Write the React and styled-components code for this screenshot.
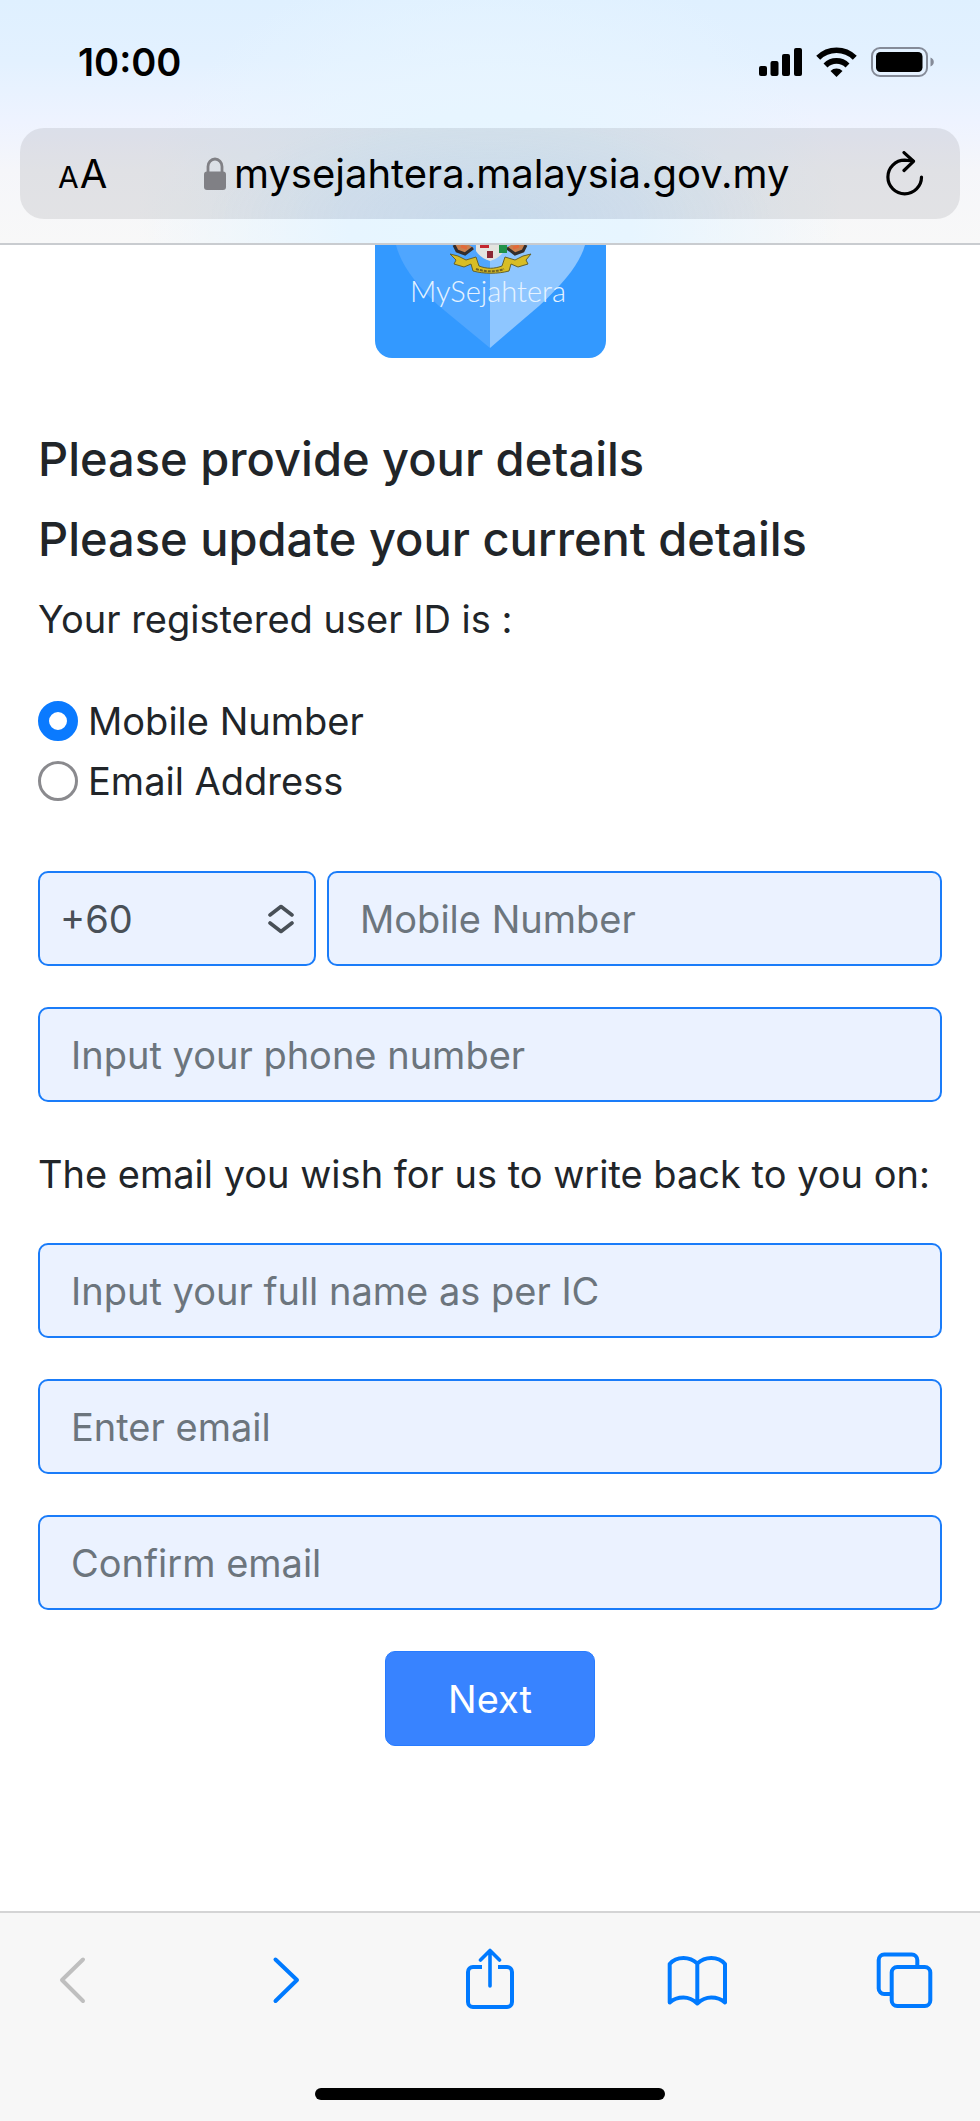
import React, { useState } from "react";
import styled, { createGlobalStyle } from "styled-components";

const GlobalStyle = createGlobalStyle`
    * {
        box-sizing: border-box;
    }

    body {
        margin: 0;
        background: #fff;
        color: #212529;
        font-family: Inter, "Liberation Sans", sans-serif;
        font-size: 38px;
        line-height: 60px;
    }

    input, select, button {
        font: inherit;
        margin: 0;
    }
`;

const Screen = styled.div`
    display: flex;
    flex-direction: column;
    min-height: 100vh;
`;

const BrowserTop = styled.header`
    padding: 32px 20px 24px;
    border-bottom: 2px solid #c9ccd0;
    background:
        radial-gradient(ellipse 36% 110% at 50% 90%, #e6f7ff 0%, #e7f5ff 40%, rgba(230, 246, 255, 0) 100%),
        linear-gradient(#dff0ff 0%, #e3f1ff 25%, #eef3ff 50%, #f5f6fa 70%, #f8f8f8 100%);
`;

const StatusBar = styled.div`
    display: flex;
    align-items: center;
    justify-content: space-between;
    padding: 0 26px 0 58px;
    margin-bottom: 36px;
    color: #000;
`;

const Clock = styled.time`
    font-weight: 600;
`;

const StatusIcons = styled.div`
    display: flex;
    align-items: center;
    gap: 14px;
`;

const AddressBar = styled.div`
    display: flex;
    align-items: center;
    justify-content: space-between;
    height: 91px;
    padding: 0 36px 0 38px;
    border-radius: 24px;
    background:
        radial-gradient(ellipse 30% 120% at 50% 100%, rgba(150, 185, 240, 0.2), rgba(150, 185, 240, 0)),
        rgba(118, 118, 122, 0.16);
`;

const PlainButton = styled.button`
    display: flex;
    align-items: center;
    padding: 0;
    border: 0;
    background: none;
    color: ${(props) => props.$color || "#000"};
`;

const TextSizeButton = styled(PlainButton)`
    align-items: baseline;
    gap: 1px;
    padding-top: 4px;
    font-size: 40px;
`;

const SmallLetter = styled.span`
    font-size: 30px;
`;

const Address = styled(PlainButton)`
    gap: 8px;
    font-size: 40px;
`;

const LogoBox = styled.div`
    display: flex;
    justify-content: center;
    margin-bottom: 71px;
`;

const Content = styled.main`
    flex: 1;
    padding: 0 38px 40px;
`;

const Heading = styled.h5`
    margin: 0 0 20px;
    font-size: 47px;
    line-height: 60px;
    font-weight: 500;
`;

const Text = styled.p`
    margin: 0;
`;

const RadioGroup = styled.div`
    display: flex;
    flex-direction: column;
    margin: 42px 0 60px;
`;

const RadioLabel = styled.label`
    display: flex;
    align-items: center;
    gap: 10px;
`;

const Radio = styled.input`
    appearance: none;
    width: 40px;
    height: 40px;
    border: 3px solid #8a8a8e;
    border-radius: 50%;
    background: #fff;

    &:checked {
        border: 11px solid #0a7aff;
    }
`;

const Fields = styled.div`
    display: flex;
    flex-direction: column;
    gap: 41px;
`;

const PhoneRow = styled.div`
    display: grid;
    grid-template-columns: 278px 1fr;
    gap: 11px;
`;

const Input = styled.input`
    width: 100%;
    height: 95px;
    padding: 0 31px;
    border: 2px solid #1a7cf9;
    border-radius: 10px;
    background: #ebf2ff;
    color: #495057;

    &::placeholder {
        color: #6c757d;
        opacity: 1;
    }
`;

const SelectBox = styled.div`
    display: grid;
    align-items: center;

    & > * {
        grid-area: 1 / 1;
    }

    & > svg {
        justify-self: end;
        margin-right: 22px;
        pointer-events: none;
    }
`;

const Select = styled(Input)`
    appearance: none;
    padding: 0 60px 0 20px;
`;

const EmailNote = styled(Text)`
    margin: 42px 0 39px;
`;

const NextButton = styled.button`
    display: block;
    width: 210px;
    height: 95px;
    margin: 41px auto 0;
    border: 1px solid #277bff;
    border-radius: 10px;
    background: #3883ff;
    color: #fff;
`;

const BrowserBottom = styled.footer`
    padding: 35px 42px 21px;
    border-top: 2px solid #d4d4d5;
    background: #f7f7f7;
`;

const Toolbar = styled.nav`
    display: flex;
    justify-content: space-between;
    margin-bottom: 76px;
`;

const HomeIndicator = styled.div`
    width: 350px;
    height: 12px;
    margin: 0 auto;
    border-radius: 6px;
    background: #000;
`;

const SignalIcon = () => (
    <svg width="43" height="30" viewBox="0 0 43 30">
        <rect x="0" y="19" width="8" height="10" rx="2" />
        <rect x="11.5" y="14" width="8" height="15" rx="2" />
        <rect x="23" y="7" width="8" height="22" rx="2" />
        <rect x="35" y="1" width="8" height="28" rx="2" />
    </svg>
);

const WifiIcon = () => (
    <svg width="41" height="30" viewBox="0 0 41 30">
        <g fill="none" stroke="#000" strokeWidth="5.6">
            <path d="M2.2 10.8a26 26 0 0 1 36.6 0" />
            <path d="M9.5 18.4a15.6 15.6 0 0 1 22 0" />
        </g>
        <path d="M20.5 30l-6-6a8.6 8.6 0 0 1 12 0z" />
    </svg>
);

const BatteryIcon = () => (
    <svg width="63" height="30" viewBox="0 0 63 30">
        <rect x="1" y="1" width="55" height="28" rx="8" fill="none" stroke="#858b98" strokeWidth="2" />
        <rect x="5" y="5" width="46.5" height="20" rx="4.5" />
        <path d="M59.5 10.5c2 .8 3.3 2.5 3.3 4.5s-1.3 3.7-3.3 4.5z" fill="#858b98" />
    </svg>
);

const LockIcon = () => (
    <svg width="22" height="33" viewBox="0 0 22 33">
        <rect x="0" y="14.5" width="22" height="18.5" rx="3" fill="#808085" />
        <path d="M4 15V9.5a7 7.5 0 0 1 14 0V15" fill="none" stroke="#808085" strokeWidth="2.8" />
    </svg>
);

const ReloadIcon = () => (
    <svg width="38" height="46" viewBox="0 0 38 46" fill="none" stroke="#000" strokeWidth="3.2" strokeLinecap="round" strokeLinejoin="round">
        <path d="M35.5 26A16.8 16.8 0 1 1 18.700 9.200L27 10" />
        <path d="M18 1.600l9.500 8.700L18 19.500" />
    </svg>
);

const SelectArrows = () => (
    <svg width="26" height="30" viewBox="0 0 26 30" fill="none" stroke="#495057" strokeWidth="3.6" strokeLinecap="round" strokeLinejoin="round">
        <path d="M2 11L13 2.5 24 11" />
        <path d="M2 19l11 8.5L24 19" />
    </svg>
);

const ToolIcon = ({ children }) => (
    <svg width="64" height="64" viewBox="0 0 64 64" fill="none" stroke="currentColor" strokeWidth="4" strokeLinecap="round" strokeLinejoin="round">
        {children}
    </svg>
);

const Logo = () => (
    <svg width="232" height="113" viewBox="0 0 232 113" role="img" aria-label="MySejahtera">
        <path d="M1 0h231v96a17 17 0 0 1-17 17H18A17 17 0 0 1 1 96z" fill="#3399ff" />
        <path d="M22 0H116V103L65 61C43 41 27 20 22 0z" fill="#4fa6ff" />
        <path d="M211 0H116V103L165 61C191 37 206 18 211 0z" fill="#8ec6ff" />
        {/* coat of arms, only the lower part shows */}
        <path d="M81 0h14l5 3-6 5-9-1zM151 0h-14l-5 3 6 5 9-1z" fill="#c8804f" />
        <path d="M80 0l3 6 8 3 8-6M152 0l-3 6-8 3-8-6" fill="none" stroke="#332d2c" strokeWidth="3" />
        <path d="M87 1l6 2M139 3l6-2" stroke="#e26a3a" strokeWidth="3" />
        <path d="M102 0h28v6c-3 5-8 8-14 10-6-2-11-5-14-10z" fill="#e4e4df" />
        <path d="M106 0h9v3h-9z" fill="#c4262e" />
        <path d="M125 0h8v8h-8z" fill="#20924a" />
        <path d="M113 6h6v7h-6z" fill="#8c2633" />
        <path d="M76 9l8 2 8 4 10-3 3 9c8 3 15 3 23 0l3-9 10 3 8-4 8-2-5 6 2 4-10 3-7-3-2 7c-11 3-25 3-36 0l-2-7-7 3-10-3 2-4z" fill="#d8bd25" stroke="#65622b" strokeWidth="1" />
        <path d="M102 24c9 3 19 3 28 0" fill="none" stroke="#716323" strokeWidth="2" strokeDasharray="3 1" />
        <text x="114" y="57" textAnchor="middle" fill="#e6f3ff" fontFamily="Lato, sans-serif" fontSize="29" fontWeight="300">MySejahtera</text>
    </svg>
);

export default function App() {
    const [idType, setIdType] = useState("mobile");

    return (
        <>
            <GlobalStyle />
            <Screen>
                <BrowserTop>
                    <StatusBar>
                        <Clock>10:00</Clock>
                        <StatusIcons>
                            <SignalIcon />
                            <WifiIcon />
                            <BatteryIcon />
                        </StatusIcons>
                    </StatusBar>
                    <AddressBar>
                        <TextSizeButton type="button" aria-label="Text size">
                            <SmallLetter>A</SmallLetter>
                            <span>A</span>
                        </TextSizeButton>
                        <Address type="button">
                            <LockIcon />
                            mysejahtera.malaysia.gov.my
                        </Address>
                        <PlainButton type="button" aria-label="Reload">
                            <ReloadIcon />
                        </PlainButton>
                    </AddressBar>
                </BrowserTop>

                <Content>
                    <LogoBox>
                        <Logo />
                    </LogoBox>
                    <Heading>Please provide your details</Heading>
                    <Heading>Please update your current details</Heading>
                    <Text id="id-type">Your registered user ID is :</Text>

                    <RadioGroup role="radiogroup" aria-labelledby="id-type">
                        <RadioLabel>
                            <Radio type="radio" name="idType" checked={idType === "mobile"} onChange={() => setIdType("mobile")} />
                            Mobile Number
                        </RadioLabel>
                        <RadioLabel>
                            <Radio type="radio" name="idType" checked={idType === "email"} onChange={() => setIdType("email")} />
                            Email Address
                        </RadioLabel>
                    </RadioGroup>

                    <Fields>
                        <PhoneRow>
                            <SelectBox>
                                <Select as="select" aria-label="Country code" defaultValue="+60">
                                    <option value="+60">+60</option>
                                    <option value="+65">+65</option>
                                </Select>
                                <SelectArrows />
                            </SelectBox>
                            <Input type="tel" placeholder="Mobile Number" aria-label="Mobile Number" />
                        </PhoneRow>
                        <Input type="tel" placeholder="Input your phone number" aria-label="Phone number" />
                    </Fields>

                    <EmailNote>The email you wish for us to write back to you on:</EmailNote>

                    <Fields>
                        <Input type="text" placeholder="Input your full name as per IC" aria-label="Full name" />
                        <Input type="email" placeholder="Enter email" aria-label="Email" />
                        <Input type="email" placeholder="Confirm email" aria-label="Confirm email" />
                    </Fields>
                    <NextButton type="button">Next</NextButton>
                </Content>

                <BrowserBottom>
                    <Toolbar>
                        <PlainButton type="button" $color="#bfbfbf" aria-label="Back">
                            <ToolIcon>
                                <path d="M41 11.5L20 32l21 21" />
                            </ToolIcon>
                        </PlainButton>
                        <PlainButton type="button" $color="#007aff" aria-label="Forward">
                            <ToolIcon>
                                <path d="M25.5 11.5L47 32 25.5 53" />
                            </ToolIcon>
                        </PlainButton>
                        <PlainButton type="button" $color="#007aff" aria-label="Share">
                            <ToolIcon>
                                <path d="M24 19H15a5 5 0 0 0-5 5v30a5 5 0 0 0 5 5h34a5 5 0 0 0 5-5V24a5 5 0 0 0-5-5H40" strokeLinecap="butt" />
                                <path d="M32 38V3M22.5 12L32 2.5 41.5 12" strokeWidth="3.6" />
                            </ToolIcon>
                        </PlainButton>
                        <PlainButton type="button" $color="#007aff" aria-label="Bookmarks">
                            <ToolIcon>
                                <path d="M31.3 15.5C27 11.5 23 10 17.5 10S7 12 3.7 16v38.5C7 51.5 12 49.5 17.5 49.5S27 51.5 31.3 55.500C35.6 51.5 39.6 49.5 45.2 49.5S55.7 51.500 59 54.500V16C55.700 12 50.700 10 45.200 10S35.600 11.500 31.300 15.500zV55" />
                            </ToolIcon>
                        </PlainButton>
                        <PlainButton type="button" $color="#007aff" aria-label="Tabs">
                            <ToolIcon>
                                <rect x="17.7" y="19" width="38.6" height="39" rx="5.5" />
                                <path d="M43.3 19v-7a5.5 5.5 0 0 0-5.5-5.5H10.2a5.5 5.5 0 0 0-5.5 5.5v28.5a5.5 5.5 0 0 0 5.5 5.5h7" />
                            </ToolIcon>
                        </PlainButton>
                    </Toolbar>
                    <HomeIndicator />
                </BrowserBottom>
            </Screen>
        </>
    );
}
